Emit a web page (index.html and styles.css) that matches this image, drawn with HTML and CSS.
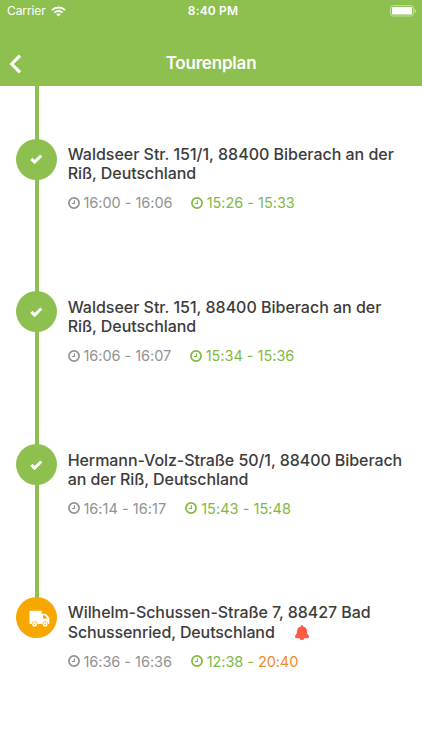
FILE: index.html
```html
<!DOCTYPE html>
<html lang="de">
<head>
<meta charset="utf-8">
<title>Tourenplan</title>
<link rel="stylesheet" href="styles.css">
</head>
<body>
<svg class="defs" width="0" height="0">
  <symbol id="clock" viewBox="0 0 12 12"><circle cx="6" cy="6" r="5.1" fill="none" stroke="currentColor" stroke-width="1.7"/><path d="M6.4 3.2v3.3H3.9" fill="none" stroke="currentColor" stroke-width="1.1"/></symbol>
  <symbol id="check" viewBox="0 0 13 10"><path d="M1.4 4.9l3.2 3.2 6.7-6.6" fill="none" stroke="#fff" stroke-width="3"/></symbol>
</svg>
<header class="header">
  <div class="status">
    <div class="carrier"><span>Carrier</span>
      <svg width="15" height="11" viewBox="0 0 15 11" fill="none" stroke="#fff" stroke-width="1.9"><path d="M1 4.2a9.2 9.2 0 0 1 13 0M3.4 6.7a5.8 5.8 0 0 1 8.2 0"/><path d="M7.5 10.6L5.3 8.4a3.1 3.1 0 0 1 4.4 0z" fill="#fff" stroke="none"/></svg>
    </div>
    <div class="time">8:40 PM</div>
    <svg class="battery" width="27" height="12" viewBox="0 0 27 12"><rect x=".6" y=".6" width="22.8" height="10.4" rx="2.5" fill="none" stroke="#fff" stroke-opacity=".5"/><rect x="2" y="2" width="20" height="7.6" rx="1" fill="#fff"/><path d="M24.6 4v3.8q1.5-.5 1.5-1.9T24.6 4z" fill="#fff" fill-opacity=".5"/></svg>
  </div>
  <div class="nav">
    <svg class="back" width="13" height="20" viewBox="0 0 13 20"><path d="M11 1.6L2.8 10l8.2 8.4" fill="none" stroke="#fff" stroke-width="3.2"/></svg>
    <h1>Tourenplan</h1>
  </div>
</header>
<main class="tour">
  <section class="stop">
    <div class="rail"><div class="dot"><svg width="13" height="10"><use href="#check"/></svg></div></div>
    <div class="info">
      <div class="address"><span class="a1">Waldseer Str. 151/1, 88400 Biberach an der</span><br><span class="a2">Riß, Deutschland</span></div>
      <div class="times"><div class="planned"><svg width="12" height="12"><use href="#clock"/></svg><span>16:00 - 16:06</span></div><div class="actual"><svg width="12" height="12"><use href="#clock"/></svg><span>15:26 - 15:33</span></div></div>
    </div>
  </section>
  <section class="stop">
    <div class="rail"><div class="dot"><svg width="13" height="10"><use href="#check"/></svg></div></div>
    <div class="info">
      <div class="address"><span class="a1">Waldseer Str. 151, 88400 Biberach an der</span><br><span class="a2">Riß, Deutschland</span></div>
      <div class="times"><div class="planned second"><svg width="12" height="12"><use href="#clock"/></svg><span>16:06 - 16:07</span></div><div class="actual"><svg width="12" height="12"><use href="#clock"/></svg><span>15:34 - 15:36</span></div></div>
    </div>
  </section>
  <section class="stop">
    <div class="rail"><div class="dot"><svg width="13" height="10"><use href="#check"/></svg></div></div>
    <div class="info">
      <div class="address"><span class="a1 tight">Hermann-Volz-Straße 50/1, 88400 Biberach</span><br><span class="a2">an der Riß, Deutschland</span></div>
      <div class="times wide"><div class="planned third"><svg width="12" height="12"><use href="#clock"/></svg><span>16:14 - 16:17</span></div><div class="actual"><svg width="12" height="12"><use href="#clock"/></svg><span>15:43 - 15:48</span></div></div>
    </div>
  </section>
  <section class="stop last">
    <div class="rail"><div class="dot current"><svg class="truck" width="21" height="18" viewBox="0 0 21 18"><path fill="#fff" fill-rule="evenodd" d="M1.3.7H12q.8 0 .8.8v2.3h3.2q.7 0 1.2.5l2.6 2.6q.5.5.5 1.2v5.8H.5V1.5q0-.8.8-.8zM14 5.3v3.1h4.3v-.3L15.7 5.5z"/><circle cx="5.6" cy="14.3" r="2.7" fill="#fff" stroke="#f7a700" stroke-width=".7"/><circle cx="16.3" cy="14.3" r="2.7" fill="#fff" stroke="#f7a700" stroke-width=".7"/><circle cx="5.6" cy="14.3" r=".8" fill="#f7a700"/><circle cx="16.3" cy="14.3" r=".8" fill="#f7a700"/></svg></div></div>
    <div class="info">
      <div class="address"><span class="a1 tight">Wilhelm-Schussen-Straße 7, 88427 Bad</span><br><span class="a2 tight">Schussenried, Deutschland</span><svg class="bell" width="14" height="15" viewBox="0 0 448 512" preserveAspectRatio="none"><path fill="#ff5a43" d="M224 512c45 0 68-28 72-64H152c4 36 27 64 72 64zm215.39-149.71c-19.32-20.76-55.47-51.99-55.47-154.29 0-77.7-54.48-139.9-127.94-155.16V32c0-17.67-14.32-32-31.98-32s-31.98 14.33-31.98 32v20.84C118.56 68.1 64.08 130.3 64.08 208c0 102.3-36.15 133.53-55.47 154.29-6 6.45-8.66 14.16-8.61 21.71.11 36 12.98 64 32.1 64h383.8c19.12 0 32-28 32.1-64 .05-7.55-2.61-15.27-8.61-21.71z"/></svg></div>
      <div class="times"><div class="planned"><svg width="12" height="12"><use href="#clock"/></svg><span>16:36 - 16:36</span></div><div class="actual overdue"><svg width="12" height="12"><use href="#clock"/></svg><span>12:38 - <b class="late">20:40</b></span></div></div>
    </div>
  </section>
</main>
</body>
</html>
```
FILE: styles.css
```css
* { box-sizing: border-box; }
body { margin: 0; width: 422px; height: 750px; overflow: hidden; background: #fff; font-family: Inter, sans-serif; color: #3c3c3c; }
svg { display: block; flex: none; }
.defs { display: none; }
.header { height: 86px; background: #8dc04f; color: #fff; }
.status { height: 22px; display: grid; grid-template-columns: 1fr auto 1fr; align-items: center; padding: 0 5px 0 7px; font-size: 12px; line-height: 22px; }
.carrier { display: flex; align-items: center; gap: 5px; letter-spacing: -.1px; }
.time { font-weight: 600; letter-spacing: .15px; padding-left: 2px; }
.battery { justify-self: end; }
.nav { height: 64px; padding-top: 20px; display: grid; grid-template-columns: 22px 1fr 22px; align-items: center; }
.back { margin-left: 9px; }
.nav h1 { margin: -2px 0 0; text-align: center; font-size: 17px; line-height: 22px; font-weight: 600; letter-spacing: -.2px; }
.tour { display: flex; flex-direction: column; }
.stop { display: flex; height: 152.8px; }
.rail { width: 41px; margin-left: 16.4px; padding-top: 52.5px; background: linear-gradient(#8dc04f, #8dc04f) 19px 0 / 4px 100% no-repeat; }
.last .rail { background-size: 4px 60px; }
.dot { width: 41px; height: 41px; border-radius: 50%; background: #8dc04f; display: flex; align-items: center; justify-content: center; }
.dot.current { background: #f7a700; }
.truck { margin: 4px 0 0 4.5px; }
.info { padding: 59px 0 0 10.3px; white-space: nowrap; }
.address { font-size: 16px; line-height: 19.4px; font-weight: 500; }
.a1 { letter-spacing: -.015px; }
.a1.tight { letter-spacing: -.07px; }
.a2 { letter-spacing: -.06px; }
.a2.tight { letter-spacing: -.11px; }
.bell { display: inline-block; vertical-align: -2px; margin-left: 20px; }
.times { display: flex; align-items: center; margin-top: 9.5px; font-size: 14.5px; line-height: 19px; letter-spacing: -.02px; }
.times.wide { letter-spacing: .04px; }
.planned, .actual { display: flex; align-items: center; gap: 3.7px; }
.planned { width: 123.3px; color: #929292; }
.planned.second { width: 122.3px; }
.planned.third { width: 117.8px; }
.actual { color: #80b93f; }
.times .overdue { letter-spacing: -.06px; }
.late { font-weight: 400; color: #ed8b2b; }
```
